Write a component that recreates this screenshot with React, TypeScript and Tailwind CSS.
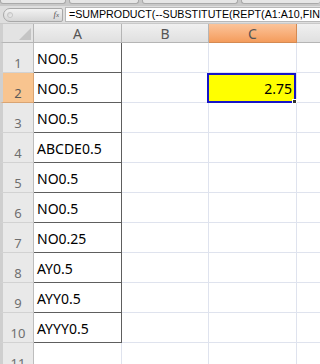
import React from "react";

const rows: string[] = [
  "NO0.5",
  "NO0.5",
  "NO0.5",
  "ABCDE0.5",
  "NO0.5",
  "NO0.5",
  "NO0.25",
  "AY0.5",
  "AYY0.5",
  "AYYY0.5",
];

function RowHeader({ n, active }: { n: number; active?: boolean }) {
  return (
    <div
      className={
        "w-[34px] shrink-0 flex items-end justify-center border-r border-b border-l-[3px] border-l-[#cfcfcf] pb-[2px] text-[13px] leading-none " +
        (active
          ? "bg-[#f8c48f] border-r-[#d9a473] border-b-[#d9a473] text-[#5a5a5a]"
          : "bg-[#e9e9e9] border-r-[#bdbdbd] border-b-[#d2d2d2] text-[#6f6f6f]")
      }
    >
      {n}
    </div>
  );
}

export default function App() {
  return (
    <div
      className="w-[320px] h-[364px] overflow-hidden bg-white flex flex-col"
      style={{ fontFamily: '"Noto Sans", "Open Sans", sans-serif' }}
    >
      {/* toolbar strip */}
      <div className="h-[6px] shrink-0 bg-[#c8c8c8] flex gap-[3px] px-[0px]">
        <div className="w-[66px] h-[4px] bg-[#e6e6e6] rounded-b-[3px] border-b border-x border-[#a9a9a9]" />
        <div className="w-[70px] h-[4px] bg-[#e6e6e6] rounded-b-[3px] border-b border-x border-[#a9a9a9]" />
        <div className="w-[96px] h-[4px] bg-[#e6e6e6] rounded-b-[3px] border-b border-x border-[#a9a9a9]" />
        <div className="flex-1 h-[4px] bg-[#e6e6e6] rounded-b-[3px] border-b border-l border-[#a9a9a9]" />
      </div>
      {/* formula bar */}
      <div className="h-[17px] shrink-0 bg-[#dedede] flex items-center">
        <div className="ml-[3px] w-[60px] h-[14px] rounded-l-[7px] rounded-r-[2px] border border-[#a8a8a8] bg-gradient-to-b from-[#f2f2f2] to-[#d6d6d6] flex items-center justify-between pl-[3px] pr-[3px]">
          <div className="w-[6px] h-[6px] rounded-full bg-gradient-to-br from-[#d0d0d0] to-[#f4f4f4] border border-[#c4c4c4]" />
          <span
            className="text-[9px] italic text-[#555] leading-none"
            style={{ fontFamily: '"Liberation Serif", serif' }}
          >
            f<span className="text-[7px]">x</span>
          </span>
        </div>
        <div className="ml-[2px] flex-1 h-[15px] bg-white border-y border-l border-[#b8b8b8] flex items-center overflow-hidden">
          <span
            className="pl-[3px] whitespace-nowrap text-[10.7px] leading-none text-black"
            style={{ fontFamily: '"Liberation Sans", Arial, sans-serif' }}
          >
            =SUMPRODUCT(--SUBSTITUTE(REPT(A1:A10,FIND(&quot;.&quot;,A1:A10)
          </span>
        </div>
      </div>
      {/* column headers */}
      <div className="h-[20px] shrink-0 flex text-[14px] leading-none text-[#555] border-t border-[#c9c9c9]">
        <div className="w-[34px] shrink-0 bg-[#e3e3e3] border-r border-b border-[#b5b5b5] border-l-[3px] border-l-[#cfcfcf] flex items-end justify-end pr-[2px] pb-[2px] pt-[3px]">
          <svg width="12" height="12" viewBox="0 0 12 12">
            <polygon points="12,0 12,12 0,12" fill="#c4c4c4" />
          </svg>
        </div>
        <div className="w-[88px] shrink-0 bg-gradient-to-b from-[#f0f0f0] to-[#e0e0e0] border-r border-b border-[#b5b5b5] flex items-end justify-center pb-[1px]">
          A
        </div>
        <div className="w-[87px] shrink-0 bg-gradient-to-b from-[#f0f0f0] to-[#e0e0e0] border-r border-b border-[#b5b5b5] flex items-end justify-center pb-[1px]">
          B
        </div>
        <div className="w-[88px] shrink-0 bg-gradient-to-b from-[#fbc49a] to-[#f49c5c] border-r border-b border-[#d48a52] flex items-end justify-center pb-[1px]">
          C
        </div>
        <div className="flex-1 bg-gradient-to-b from-[#f0f0f0] to-[#e0e0e0] border-b border-[#b5b5b5]" />
      </div>
      {/* rows */}
      {rows.map((v, i) => (
        <div key={i} className="h-[30px] shrink-0 flex">
          <RowHeader n={i + 1} active={i === 1} />
          <div className="w-[88px] shrink-0 border-r border-b border-[#5e5e5e] flex items-end pl-[3px] pb-[4px] text-[14px] leading-[19px] text-black">
            {v}
          </div>
          <div className="w-[87px] shrink-0 border-r border-b border-[#dfe3ee]" />
          <div className="w-[88px] shrink-0 border-r border-b border-[#dfe3ee] relative">
            {i === 1 && (
              <div className="absolute -left-[2px] top-0 right-0 -bottom-[1px] border-2 border-[#1515c8] bg-[#ffff00] flex items-end justify-end pr-[2px] pb-[3px] text-[14px] leading-[19px] text-black">
                2.75
                <div className="absolute -right-[3px] -bottom-[3px] w-[5px] h-[5px] bg-[#333] border border-white" />
              </div>
            )}
          </div>
          <div className="flex-1 border-b border-[#dfe3ee]" />
        </div>
      ))}
      <div className="h-[30px] shrink-0 flex">
        <RowHeader n={11} />
        <div className="w-[88px] shrink-0 border-r border-b border-[#dfe3ee]" />
        <div className="w-[87px] shrink-0 border-r border-b border-[#dfe3ee]" />
        <div className="w-[88px] shrink-0 border-r border-b border-[#dfe3ee]" />
        <div className="flex-1 border-b border-[#dfe3ee]" />
      </div>
    </div>
  );
}
